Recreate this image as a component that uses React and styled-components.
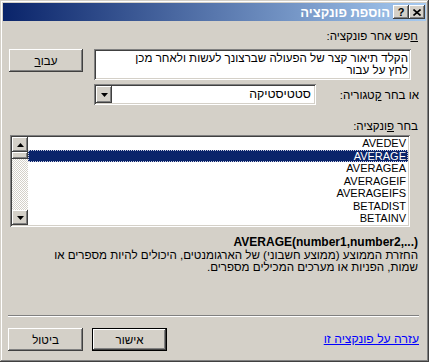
import React from 'react';
import styled, { createGlobalStyle, css } from 'styled-components';

const GlobalStyle = createGlobalStyle`
  html, body {
    margin: 0;
    padding: 0;
    background: #d4d0c8;
  }
  * {
    box-sizing: border-box;
  }
`;

const face = '#d4d0c8';
const font = `"Liberation Sans", "DejaVu Sans", sans-serif`;

const raised = css`
  background: ${face};
  box-shadow: inset -1px -1px #404040, inset 1px 1px #ffffff,
    inset -2px -2px #808080, inset 2px 2px ${face};
`;

const sunken = css`
  background: #ffffff;
  box-shadow: inset 1px 1px #808080, inset -1px -1px #ffffff,
    inset 2px 2px #404040, inset -2px -2px ${face};
`;

const Window = styled.div`
  width: 429px;
  height: 362px;
  padding: 3px;
  display: flex;
  flex-direction: column;
  background: ${face};
  box-shadow: inset -1px -1px #404040, inset 1px 1px ${face},
    inset -2px -2px #808080, inset 2px 2px #ffffff;
  font-family: ${font};
  font-size: 11.6px;
  color: #000;
`;

const TitleBar = styled.div`
  height: 18px;
  display: flex;
  align-items: center;
  justify-content: flex-end;
  padding-right: 1px;
  background: linear-gradient(to right, #0a246a, #a6caf0);
`;

const TitleText = styled.span`
  color: #ffffff;
  font-weight: bold;
  font-size: 13px;
  margin-right: 3px;
  direction: rtl;
`;

const CaptionButton = styled.div`
  ${raised};
  width: 16px;
  height: 14px;
  display: flex;
  align-items: center;
  justify-content: center;
  font-weight: bold;
  font-size: 11px;
  line-height: 1;
`;

const Body = styled.div`
  flex: 1;
  display: flex;
  flex-direction: column;
  padding: 0 8px 0 6px;
  direction: rtl;
`;

const Label = styled.div`
  line-height: 13px;
  margin-top: ${p => p.$top}px;
  white-space: nowrap;
`;

const Key = styled.span`
  text-decoration: underline;
`;

const SearchRow = styled.div`
  margin-top: 7px;
  height: 31px;
  display: flex;
  justify-content: space-between;
  align-items: flex-start;
`;

const SearchField = styled.div`
  ${sunken};
  width: 317px;
  height: 31px;
  margin-right: 7px;
  padding: 3px 3px 0 0;
  line-height: 12px;
  white-space: nowrap;
  overflow: hidden;
`;

const Button = styled.div`
  ${raised};
  width: ${p => p.$w || 75}px;
  height: 23px;
  display: flex;
  align-items: center;
  justify-content: center;
  ${p =>
    p.$default &&
    css`
      border: 1px solid #000;
    `}
`;

const CategoryRow = styled.div`
  margin-top: 4px;
  height: 21px;
  display: flex;
  align-items: center;
`;

const CategoryLabel = styled.div`
  flex: 1;
  margin-right: -1px;
  white-space: nowrap;
`;

const Combo = styled.div`
  ${sunken};
  width: 222px;
  height: 21px;
  margin-left: 85px;
  padding: 2px;
  display: flex;
  align-items: stretch;
`;

const ComboText = styled.div`
  flex: 1;
  padding-right: 3px;
  line-height: 17px;
  font-size: 12.4px;
`;

const ArrowButton = styled.div`
  ${raised};
  width: ${p => p.$w || 16}px;
  height: ${p => p.$h || 17}px;
  display: flex;
  align-items: center;
  justify-content: center;
  flex-shrink: 0;
`;

const ListBox = styled.div`
  ${sunken};
  margin: 3px 8px 0 1px;
  height: 92px;
  padding: 2px;
  display: flex;
  overflow: hidden;
`;

const Items = styled.div`
  flex: 1;
  display: flex;
  flex-direction: column;
  overflow: hidden;
`;

const Item = styled.div`
  height: 12.5px;
  line-height: 12.5px;
  flex-shrink: 0;
  padding-right: 2px;
  font-size: 11px;
  direction: ltr;
  text-align: right;
  ${p =>
    p.$selected &&
    css`
      background: #0a246a;
      color: #ffffff;
      outline: 1px dotted #c8cce0;
      outline-offset: -1px;
    `}
`;

const ScrollBar = styled.div`
  width: 16px;
  display: flex;
  flex-direction: column;
  flex-shrink: 0;
`;

const Track = styled.div`
  flex: 1;
  background: repeating-conic-gradient(${face} 0 25%, #ffffff 0 50%) 0 0 / 2px 2px;
`;

const Thumb = styled.div`
  ${raised};
  height: 7px;
`;

const Formula = styled.div`
  margin-top: 9px;
  line-height: 12px;
  font-size: 12px;
  font-weight: bold;
  direction: ltr;
  text-align: right;
`;

const Description = styled.div`
  margin-top: 1px;
  line-height: 12px;
  white-space: nowrap;
`;

const Spacer = styled.div`
  flex: 1;
`;

const Separator = styled.div`
  height: 2px;
  margin: 0 -1px;
  border-top: 1px solid #808080;
  border-bottom: 1px solid #ffffff;
`;

const ButtonRow = styled.div`
  margin: 11px -1px 8px 0;
  height: 23px;
  display: flex;
  justify-content: space-between;
  align-items: center;
`;

const HelpLink = styled.a`
  color: #0000ff;
  text-decoration: underline;
  cursor: pointer;
  margin-top: -2px;
  font-size: 12.2px;
`;

const ButtonGroup = styled.div`
  display: flex;
  gap: 9px;
  margin-left: -1px;
`;

const Triangle = ({ up }) => (
  <svg width="7" height="4" viewBox="0 0 7 4">
    <polygon points={up ? '0,4 7,4 3.5,0' : '0,0 7,0 3.5,4'} fill="#000" />
  </svg>
);

const CloseGlyph = () => (
  <svg width="8" height="7" viewBox="0 0 8 7">
    <path d="M0.5 0.5 L7.5 6.5 M7.5 0.5 L0.5 6.5" stroke="#000" strokeWidth="1.6" />
  </svg>
);

const functions = ['AVEDEV', 'AVERAGE', 'AVERAGEA', 'AVERAGEIF', 'AVERAGEIFS', 'BETADIST', 'BETAINV'];

export default function App() {
  return (
    <>
      <GlobalStyle />
      <Window>
        <TitleBar>
          <TitleText>הוספת פונקציה</TitleText>
          <CaptionButton>?</CaptionButton>
          <CaptionButton>
            <CloseGlyph />
          </CaptionButton>
        </TitleBar>
        <Body>
          <Label $top={8}>
            <Key>ח</Key>פש אחר פונקציה:
          </Label>
          <SearchRow>
            <SearchField>
              הקלד תיאור קצר של הפעולה שברצונך לעשות ולאחר מכן
              <br />
              לחץ על עבור
            </SearchField>
            <Button $w={74}>
              עבו<Key>ר</Key>
            </Button>
          </SearchRow>
          <CategoryRow>
            <CategoryLabel>
              או בחר <Key>ק</Key>טגוריה:
            </CategoryLabel>
            <Combo>
              <ComboText>סטטיסטיקה</ComboText>
              <ArrowButton>
                <Triangle />
              </ArrowButton>
            </Combo>
          </CategoryRow>
          <Label $top={14}>
            בחר <Key>פ</Key>ונקציה:
          </Label>
          <ListBox>
            <Items>
              {functions.map(name => (
                <Item key={name} $selected={name === 'AVERAGE'}>
                  {name}
                </Item>
              ))}
            </Items>
            <ScrollBar>
              <ArrowButton $h={15}>
                <Triangle up />
              </ArrowButton>
              <Thumb />
              <Track />
              <ArrowButton $h={15}>
                <Triangle />
              </ArrowButton>
            </ScrollBar>
          </ListBox>
          <Formula>AVERAGE(number1,number2,...)</Formula>
          <Description>
            החזרת הממוצע (ממוצע חשבוני) של הארגומנטים, היכולים להיות מספרים או
            <br />
            שמות, הפניות או מערכים המכילים מספרים.
          </Description>
          <Spacer />
          <Separator />
          <ButtonRow>
            <HelpLink>עזרה על פונקציה זו</HelpLink>
            <ButtonGroup>
              <Button $default>אישור</Button>
              <Button>ביטול</Button>
            </ButtonGroup>
          </ButtonRow>
        </Body>
      </Window>
    </>
  );
}
